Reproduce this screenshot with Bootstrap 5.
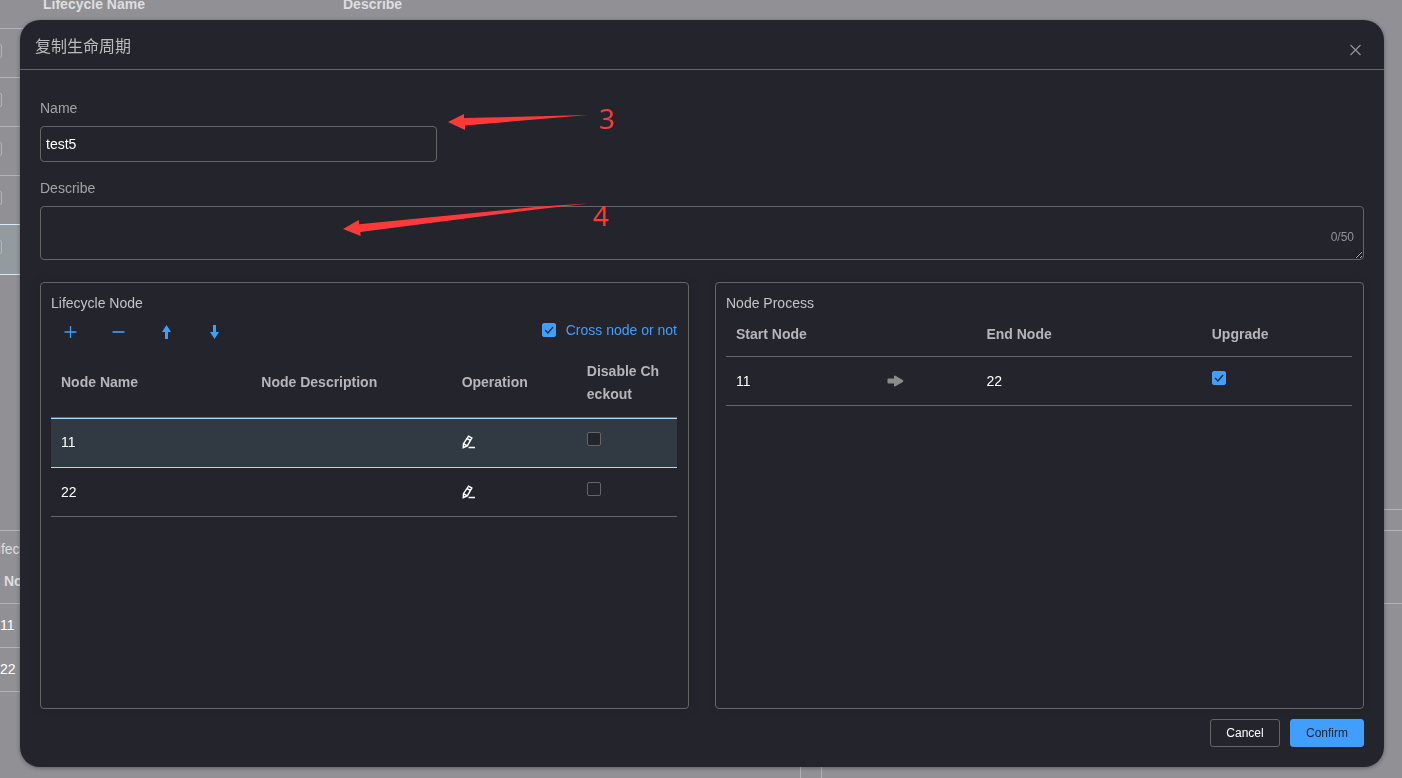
<!DOCTYPE html>
<html lang="en">
<head>
<meta charset="utf-8">
<meta name="viewport" content="width=device-width, initial-scale=1">
<title>Lifecycle</title>
<link href="https://cdn.jsdelivr.net/npm/bootstrap@5.3.0/dist/css/bootstrap.min.css" rel="stylesheet">
<style>
:root { --panel: #24242d; --line: #656565; --accent: #409eff; }
body { font-family: "Liberation Sans", "Noto Sans CJK SC", sans-serif; font-size: 14px; line-height: 20px; background: #919095; color: #fff; }
.table { --bs-table-bg: transparent; --bs-table-color: #fff; table-layout: fixed; margin: 0; color: #fff; }
.table > :not(caption) > * > * { padding: 0 10px; vertical-align: middle; background: transparent; box-shadow: none; border-bottom: 1px solid var(--line); color: inherit; }
.form-check-input[type=checkbox] { width: 14px; height: 14px; margin: 0; border: 1px solid var(--line); border-radius: 2px; background-color: transparent; box-shadow: none; vertical-align: middle; flex: none; }
.form-check-input:checked[type=checkbox] { background-color: var(--accent); border-color: var(--accent); background-image: url("data:image/svg+xml,%3csvg xmlns='http://www.w3.org/2000/svg' viewBox='0 0 14 14'%3e%3cpath d='M2.500 7l3.200 3.500 6-7' fill='none' stroke='%2324242d' stroke-width='1.5'/%3e%3c/svg%3e"); }

/* page behind the dialog */
.backpage { height: 100vh; color: #dededf; }
.backpage .table > :not(caption) > * > * { border-color: #b4b4b5; }
.backpage .form-check-input[type=checkbox] { border-color: #b4b4b5; }
.life-table { margin: -21px 0 0 -22px; }
.life-table thead { color: #dededf; }
.life-table tr { height: 49px; }
.life-table tr.picked { height: 50px; }
.life-table .col-pick { width: 55px; }
.life-table .col-name { width: 300px; }
.life-table tr.picked { background: #949b9f; }
.life-table tr.before td, .life-table tr.picked td { border-color: #d3e9fa !important; }
.life-table td { padding-bottom: 6px !important; }
.life-table th { padding-top: 2px !important; }
.table-end { height: 235px; width: 50%; border-bottom: 1px solid #b4b4b5; }
.lower { margin: 20px -20px 0 -21px; gap: 20px; }
.lower section { border: 1px solid #b4b4b5; padding: 8px 0 0 10px; flex: 1 1 0; }
.lower section.first { flex: 0 0 822px; }
.lower thead tr { height: 45px; }
.lower tr { height: 44px; color: #fff; }
.lower td { padding-bottom: 2px !important; }
.lower th { color: #dededf; padding-left: 14px !important; }

/* dialog */
.overlay { inset: 0; padding: 20px 18px 11px 20px; }
.sheet { background: var(--panel); border-radius: 20px; box-shadow: 0 1px 4px rgba(0,0,0,.35); }
.sheet-head { height: 50px; padding: 0 22px 0 15px; border-bottom: 1px solid var(--line); }
.sheet-head h1 { font-size: 16px; line-height: 24px; font-weight: 400; color: #bcbcbe; margin: 4px 0 0; align-self: flex-start; padding-top: 11px; }
.close-x { padding: 0; border: 0; background: none; color: #909399; line-height: 0; margin-top: 10px; }
.sheet-body { padding: 20px; }
.field-label { line-height: 36px; color: #a3a3a6; }
.form-control, .form-control:focus { background: transparent; border: 1px solid var(--line); border-radius: 4px; color: #fff; font-size: 14px; padding: 0 5px; box-shadow: none; }
.name-box { height: 36px; width: 30%; min-width: 240px; margin-bottom: 8px; }
.desc-box { height: 54px; min-height: 54px; }
.counter { right: 10px; bottom: 13px; font-size: 12px; color: #909399; }
.panels { gap: 26px; margin-top: 22px; }
.pane { flex: 1 1 0; min-width: 0; border: 1px solid var(--line); border-radius: 4px; padding: 10px 11px 10px 10px; box-shadow: 0 0 12px rgba(0,0,0,.12); }
.pane h2 { font-size: 14px; line-height: 20px; font-weight: 400; color: #c4c4c6; margin: 0; }
.pane th { color: #b7b5ba; font-weight: 700; }
.tools { height: 36px; padding-left: 11px; }
.tools button { width: 16px; height: 16px; padding: 0; border: 0; background: none; color: var(--accent); line-height: 0; }
.cross { gap: 10px; color: var(--accent); margin-bottom: 2px; }
.node-table th { height: 68px; line-height: 23px; word-break: break-all; }
.node-table th:last-child { padding-right: 16px; }
.node-table td, .flow-table td { height: 49px; }
.node-table tr.current td { height: 50px; }
.flow-table th { height: 43px; }
.node-table tr.current { background: #313a43; }
.node-table tr.current td { border-color: #abdbf5; box-shadow: inset 0 1px #abdbf5; }
.node-table tr.current .form-check-input { background-color: var(--panel); }
.node-table .form-check-input, .flow-table .form-check-input { display: block; margin-bottom: 6px !important; }
.icon-btn { padding: 0; border: 0; background: none; color: #fff; line-height: 0; display: block; }
.sheet-foot { gap: 10px; margin-top: 10px; }
.sheet-foot .btn { height: 28px; min-width: 70px; padding: 0 15px; font-size: 12px; border-radius: 3px; }
.btn-cancel { color: #fff; border-color: var(--line); }
.btn-confirm { color: var(--panel); background: var(--accent); border-color: var(--accent); }
.marks { left: 320px; top: 80px; pointer-events: none; }
.marks text { font-family: "Noto Sans", sans-serif; font-size: 28px; }
</style>
</head>
<body>
<div class="backpage overflow-hidden" aria-hidden="true">
  <table class="table life-table">
    <colgroup><col class="col-pick"><col class="col-name"><col></colgroup>
    <thead><tr><th></th><th>Lifecycle Name</th><th>Describe</th></tr></thead>
    <tbody>
      <tr><td><input class="form-check-input" type="checkbox" aria-label="Select row 1"></td><td></td><td></td></tr>
      <tr><td><input class="form-check-input" type="checkbox" aria-label="Select row 2"></td><td></td><td></td></tr>
      <tr><td><input class="form-check-input" type="checkbox" aria-label="Select row 3"></td><td></td><td></td></tr>
      <tr class="before"><td><input class="form-check-input" type="checkbox" aria-label="Select row 4"></td><td></td><td></td></tr>
      <tr class="picked"><td><input class="form-check-input" type="checkbox" aria-label="Select row 5"></td><td></td><td></td></tr>
    </tbody>
  </table>
  <div class="table-end ms-auto"></div>
  <div class="lower d-flex vh-100">
    <section class="first">
      <div>Lifecycle Node</div>
      <table class="table">
        <thead><tr><th>Node Name</th></tr></thead>
        <tbody><tr><td>11</td></tr><tr><td>22</td></tr></tbody>
      </table>
    </section>
    <section>
      <div>Node Process</div>
      <table class="table"><thead><tr><th>Start Node</th></tr></thead></table>
    </section>
  </div>
</div>

<div class="overlay position-fixed d-flex">
  <div class="sheet position-relative d-flex flex-column flex-grow-1" role="dialog" aria-labelledby="dlgTitle">
    <header class="sheet-head d-flex justify-content-between align-items-center">
      <h1 id="dlgTitle" lang="zh-CN">复制生命周期</h1>
      <button class="close-x" type="button" aria-label="Close">
        <svg width="13" height="13" viewBox="0 0 13 13" stroke="currentColor" stroke-width="1.2"><path d="M1.5 2l10 10M11.5 2l-10 10"/></svg>
      </button>
    </header>
    <form class="sheet-body d-flex flex-column flex-grow-1">
      <label class="field-label" for="nameBox">Name</label>
      <input class="form-control name-box" id="nameBox" type="text" value="test5">
      <label class="field-label" for="descBox">Describe</label>
      <div class="position-relative d-flex">
        <textarea class="form-control desc-box" id="descBox" maxlength="50"></textarea>
        <span class="counter position-absolute">0/50</span>
      </div>

      <div class="panels d-flex flex-grow-1">
        <section class="pane">
          <h2>Lifecycle Node</h2>
          <div class="tools d-flex align-items-center justify-content-between">
            <div class="d-flex gap-4">
              <button type="button" class="me-2" aria-label="Add"><svg width="16" height="16" viewBox="0 0 16 16" stroke="currentColor"><path d="M8.5 3v12M2.500 9h12" stroke-width="1.3"/></svg></button>
              <button type="button" class="me-2" aria-label="Remove"><svg width="16" height="16" viewBox="0 0 16 16" stroke="currentColor"><path d="M2.500 9h12" stroke-width="1.6"/></svg></button>
              <button type="button" class="me-2" aria-label="Move up"><svg width="16" height="16" viewBox="0 0 16 16" fill="currentColor"><path d="M8.500 2l4.500 7H10V16H7V9H4z"/></svg></button>
              <button type="button" aria-label="Move down"><svg width="16" height="16" viewBox="0 0 16 16" fill="currentColor"><path d="M8.500 16l4.500-7H10V2H7v7H4z"/></svg></button>
            </div>
            <div class="cross d-flex align-items-center">
              <input class="form-check-input" id="crossBox" type="checkbox" checked>
              <label for="crossBox">Cross node or not</label>
            </div>
          </div>
          <table class="table node-table">
            <colgroup><col style="width:32%"><col style="width:32%"><col style="width:20%"><col style="width:16%"></colgroup>
            <thead><tr><th>Node Name</th><th>Node Description</th><th>Operation</th><th>Disable Checkout</th></tr></thead>
            <tbody>
              <tr class="current"><td>11</td><td></td>
                <td><button type="button" class="icon-btn" aria-label="Edit 11"><svg width="14" height="14" viewBox="0 0 14 14" fill="none" stroke="currentColor" stroke-width="1.5"><path d="M6.500 1.200L9.800 3.100 5.300 10.800 1.300 12.600 1.500 8.700zM4.900 3.400L8.500 5.500M1.500 8.700L5.300 10.800M6.500 12.500H13"/></svg></button></td>
                <td><input class="form-check-input" type="checkbox" aria-label="Disable checkout 11"></td></tr>
              <tr><td>22</td><td></td>
                <td><button type="button" class="icon-btn" aria-label="Edit 22"><svg width="14" height="14" viewBox="0 0 14 14" fill="none" stroke="currentColor" stroke-width="1.5"><path d="M6.500 1.200L9.800 3.100 5.300 10.800 1.300 12.600 1.500 8.700zM4.900 3.400L8.500 5.500M1.500 8.700L5.300 10.800M6.500 12.500H13"/></svg></button></td>
                <td><input class="form-check-input" type="checkbox" aria-label="Disable checkout 22"></td></tr>
            </tbody>
          </table>
        </section>

        <section class="pane">
          <h2>Node Process</h2>
          <table class="table flow-table">
            <colgroup><col style="width:24%"><col style="width:16%"><col style="width:36%"><col style="width:24%"></colgroup>
            <thead><tr><th>Start Node</th><th></th><th>End Node</th><th>Upgrade</th></tr></thead>
            <tbody>
              <tr><td>11</td>
                <td><svg class="d-block" width="18" height="12" viewBox="0 0 18 12" fill="#8b8b8b"><path d="M2.500 3.500H8V1.300Q8 .3 9 .5L16.800 5Q18 6 16.800 7L9 11.400Q8 11.700 8 10.700V8.500H2.500Q1.500 8.500 1.500 7.500V4.500Q1.500 3.500 2.500 3.500z"/></svg></td>
                <td>22</td>
                <td><input class="form-check-input" type="checkbox" checked aria-label="Upgrade 11 to 22"></td></tr>
            </tbody>
          </table>
        </section>
      </div>

      <div class="sheet-foot d-flex justify-content-end">
        <button type="button" class="btn btn-cancel">Cancel</button>
        <button type="button" class="btn btn-confirm">Confirm</button>
      </div>
    </form>

    <svg class="marks position-absolute" width="290" height="150" viewBox="340 100 290 150" fill="#fd3a39">
      <path d="M448 122L464 114V118L588 115 465 125.500V130z"/>
      <path d="M343 229L358.700 220 359.200 224.200 540 206.500 588 203.500 540 209 360.300 232 360.700 236z"/>
      <text x="599" y="129">3</text>
      <text x="593" y="226">4</text>
    </svg>
  </div>
</div>
<script src="https://cdn.jsdelivr.net/npm/bootstrap@5.3.0/dist/js/bootstrap.bundle.min.js"></script>
</body>
</html>
